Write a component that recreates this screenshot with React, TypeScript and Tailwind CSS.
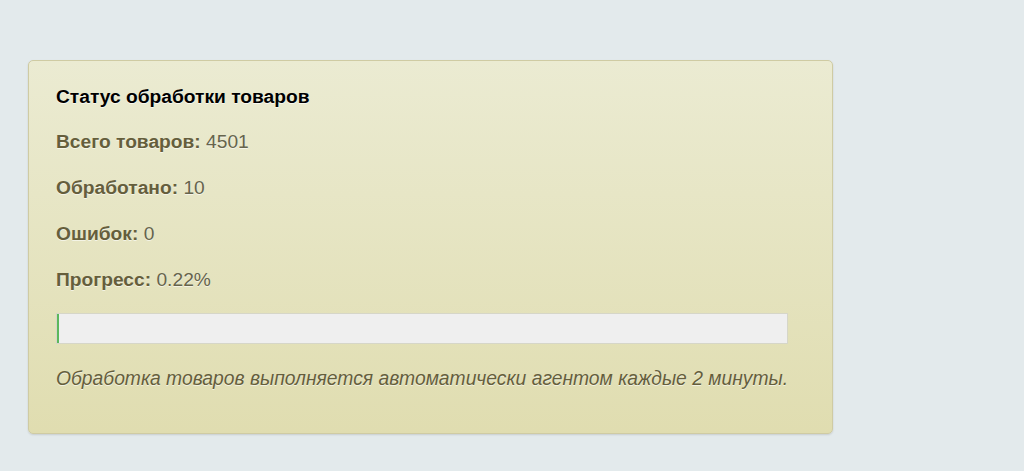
const rows = [
  { label: 'Всего товаров:', value: '4501' },
  { label: 'Обработано:', value: '10' },
  { label: 'Ошибок:', value: '0' },
  { label: 'Прогресс:', value: '0.22%' },
]

export default function App() {
  const progress = 0.22

  return (
    <div className="min-h-[471px] w-full bg-[#e3eaec] pt-[60px] pl-[28px] font-['Liberation_Sans',Arial,sans-serif]">
      <div className="w-[805px] rounded-[5px] border border-[#cfcba3] bg-gradient-to-b from-[#ebebd2] to-[#e0ddb0] pl-[27px] pr-[44px] pt-[26px] pb-[44px] shadow-[0_1px_2px_rgba(0,0,0,0.12)]">
        <h2 className="text-[19.2px] leading-[20px] font-bold text-black [text-shadow:0_1px_0_rgba(255,255,255,0.7)]">
          Статус обработки товаров
        </h2>
        {rows.map((r, i) => (
          <p
            key={r.label}
            className={`text-[19.2px] leading-[20px] text-[#66644c] [text-shadow:0_1px_0_rgba(255,255,255,0.6)] ${i === 0 ? 'mt-[25px]' : 'mt-[26px]'}`}
          >
            <span className="font-bold text-[#655e3c]">{r.label}</span> {r.value}
          </p>
        ))}
        <div className="mt-[23px] h-[31px] w-full border border-[#d6d6c8] bg-[#efefef]">
          <div className="h-full border-l-2 border-[#5cb85c] bg-[#5cb85c]" style={{ width: `${progress}%` }} />
        </div>
        <p className="mt-[25px] whitespace-nowrap text-[19.3px] leading-[20px] italic text-[#655e3c] [text-shadow:0_1px_0_rgba(255,255,255,0.6)]">
          Обработка товаров выполняется автоматически агентом каждые 2 минуты.
        </p>
      </div>
    </div>
  )
}
